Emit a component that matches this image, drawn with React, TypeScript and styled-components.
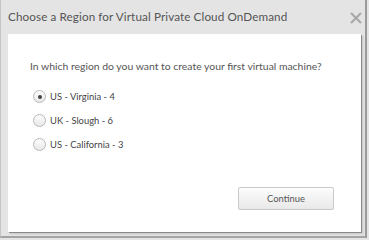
import React, { useState } from "react";
import styled, { createGlobalStyle } from "styled-components";

const regions = [
  { id: "va", label: "US - Virginia - 4" },
  { id: "uk", label: "UK - Slough - 6" },
  { id: "ca", label: "US - California - 3" },
];

function App() {
  const [selected, setSelected] = useState("va");
  return (
    <>
      <GlobalStyle />
      <Dialog>
        <Header>
          <Title>Choose a Region for Virtual Private Cloud OnDemand</Title>
          <Close aria-label="close">
            <svg width="12" height="12" viewBox="0 0 12 12">
              <path d="M1 1 L11 11 M11 1 L1 11" stroke="#a9a9a9" strokeWidth="2.2" />
            </svg>
          </Close>
        </Header>
        <Panel>
          <Question>In which region do you want to create your first virtual machine?</Question>
          <Options>
            {regions.map((r) => (
              <Option key={r.id} onClick={() => setSelected(r.id)}>
                <Radio $checked={selected === r.id} />
                <span>{r.label}</span>
              </Option>
            ))}
          </Options>
          <Footer>
            <ContinueBtn>Continue</ContinueBtn>
          </Footer>
        </Panel>
      </Dialog>
    </>
  );
}

export default App;

const GlobalStyle = createGlobalStyle`
  body {
    margin: 0;
    background: #e4e4e4;
    font-family: "Lato", "Open Sans", sans-serif;
  }
`;

const Dialog = styled.div`
  width: 367px;
  height: 238px;
  box-sizing: border-box;
  background: #e4e4e4;
  border-left: 1px solid #c4c4c4;
  border-right: 2px solid #9a9a9a;
  border-bottom: 2px solid #a4a4a4;
  display: flex;
  flex-direction: column;
`;

const Header = styled.div`
  height: 34px;
  display: flex;
  align-items: center;
  justify-content: space-between;
  padding: 0 3px 2px 7px;
  box-sizing: border-box;
`;

const Title = styled.div`
  font-size: 11.7px;
  color: #555;
  letter-spacing: 0.1px;
`;

const Close = styled.div`
  display: flex;
  margin-top: 4px;
`;

const Panel = styled.div`
  flex: 1;
  margin: 0 4px 4px 7px;
  background: #fff;
  box-shadow: 1px 1px 0 #8a8a8a, 2px 2px 2px rgba(0, 0, 0, 0.15);
  display: flex;
  flex-direction: column;
  padding: 26px 27px 22px 22px;
`;

const Question = styled.div`
  font-size: 10.4px;
  color: #555;
`;

const Options = styled.div`
  display: flex;
  flex-direction: column;
  gap: 11px;
  margin-top: 18px;
  padding-left: 3px;
`;

const Option = styled.label`
  display: flex;
  align-items: center;
  gap: 4px;
  font-size: 9.4px;
  color: #444;
  cursor: pointer;
  height: 13px;
`;

const Radio = styled.span<{ $checked: boolean }>`
  width: 11px;
  height: 11px;
  border-radius: 50%;
  border: 1px solid #b8b8b8;
  background: linear-gradient(#fdfdfd, #e8e8e8);
  display: flex;
  align-items: center;
  justify-content: center;
  &::after {
    content: "";
    width: 4px;
    height: 4px;
    border-radius: 50%;
    background: ${(p) => (p.$checked ? "#444" : "transparent")};
  }
`;

const Footer = styled.div`
  margin-top: auto;
  display: flex;
  justify-content: flex-end;
`;

const ContinueBtn = styled.button`
  width: 96px;
  height: 23px;
  border: 1px solid #c9c9c9;
  border-radius: 2px;
  background: linear-gradient(#fcfcfc, #e9e9e9);
  font-family: inherit;
  font-size: 9.4px;
  color: #555;
  cursor: pointer;
`;
